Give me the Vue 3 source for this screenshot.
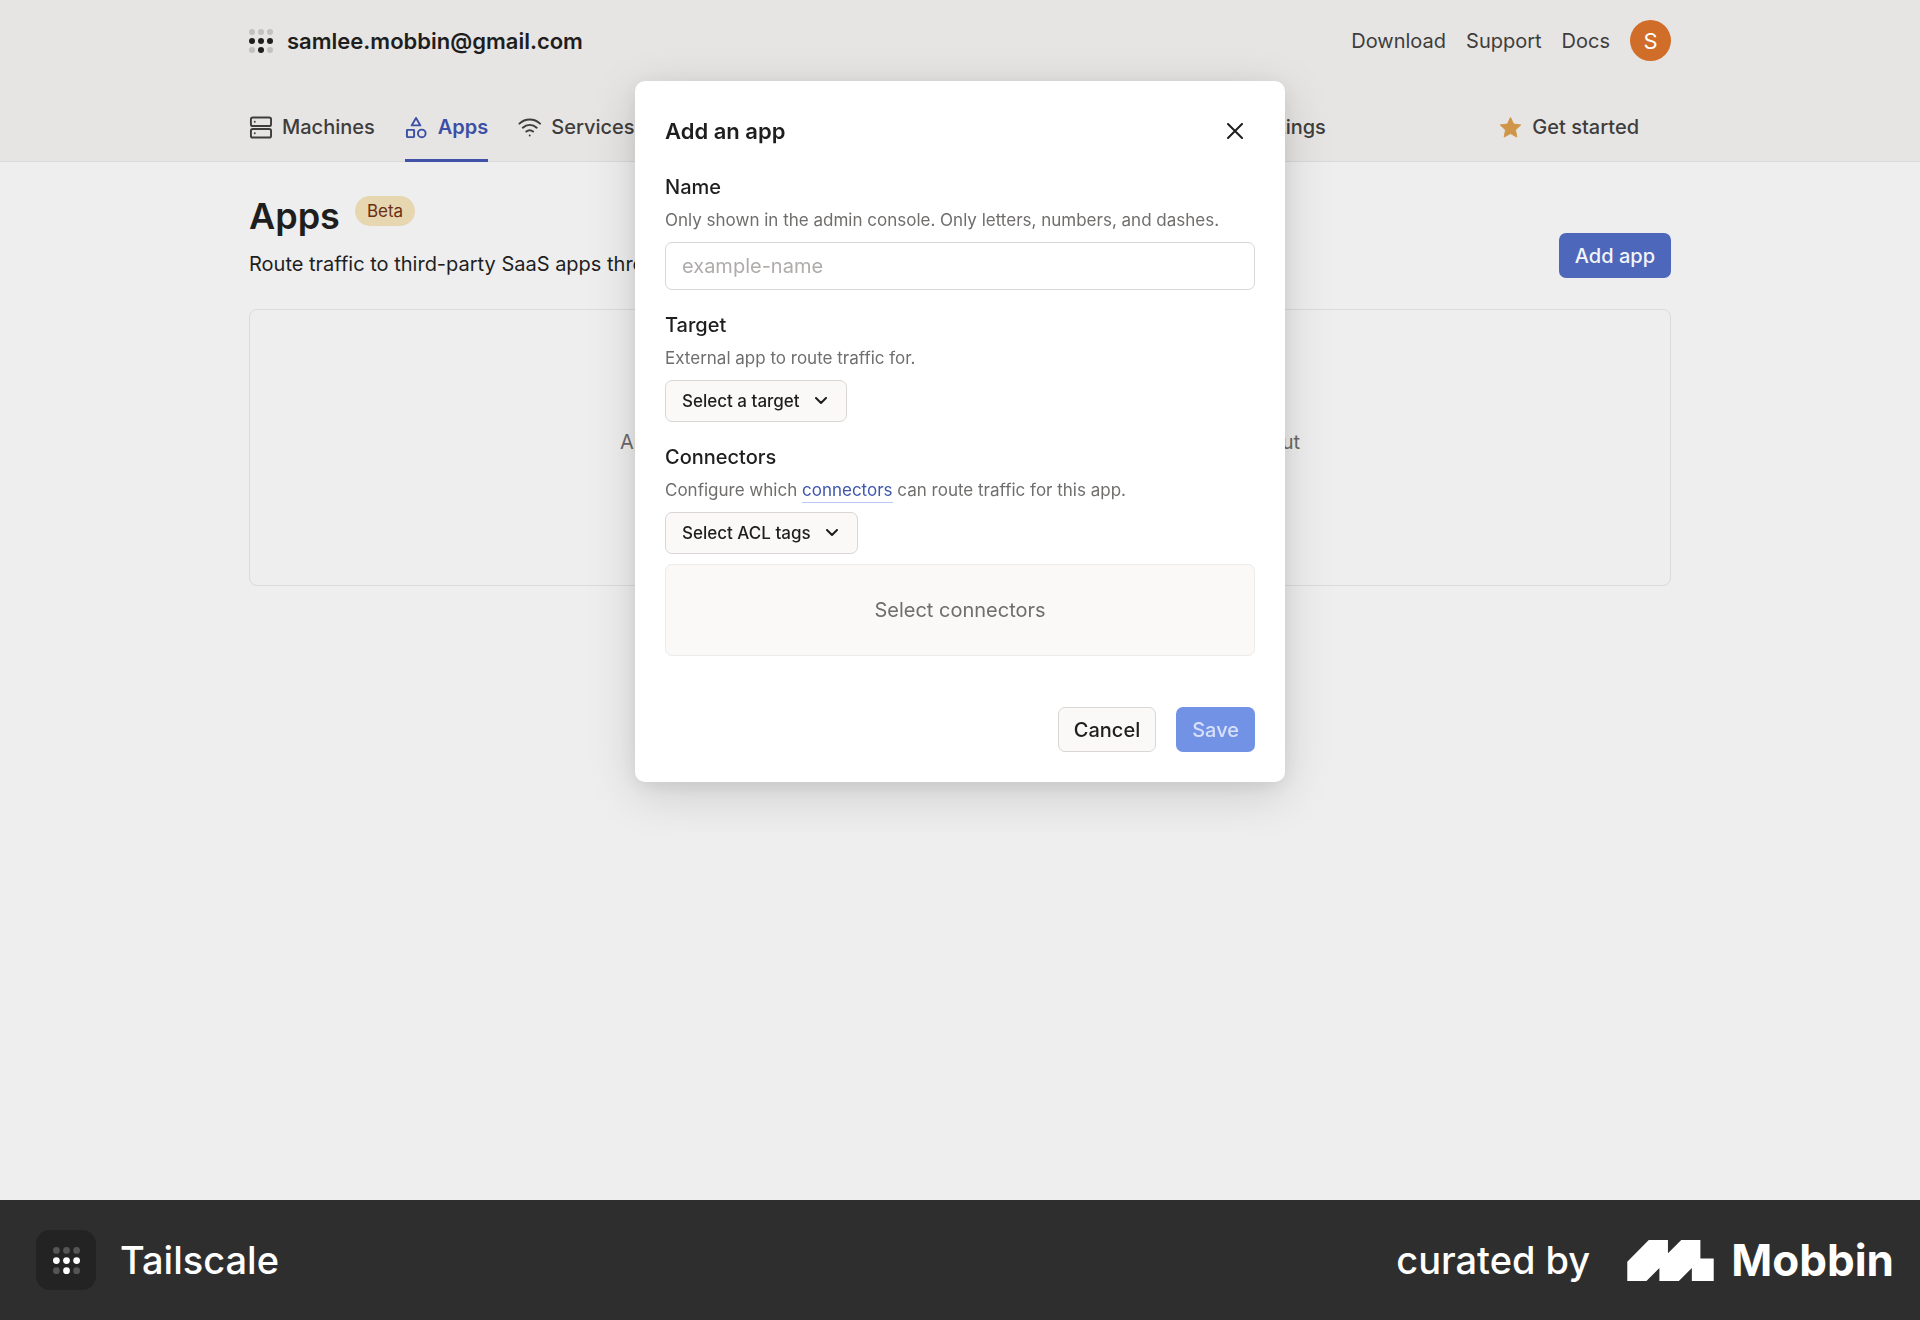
<script setup>
import { ref } from 'vue'

const name = ref('')
const dots = [
  [0, 0, 0],
  [1, 1, 1],
  [0, 1, 0],
].flatMap((row, y) => row.map((on, x) => ({ on: !!on, cx: 3 + x * 9, cy: 3 + y * 9 })))

const tabs = [
  { label: 'Machines', icon: 'machines' },
  { label: 'Apps', icon: 'apps', active: true },
  { label: 'Services', icon: 'services' },
  { label: 'Users', icon: 'users' },
  { label: 'Access controls', icon: 'lock' },
  { label: 'Logs', icon: 'logs' },
  { label: 'DNS', icon: 'dns' },
  { label: 'Settings', icon: 'settings' },
]
const icons = {
  machines: '<rect x="2" y="1.500" width="21" height="9" rx="2"/><rect x="2" y="13.500" width="21" height="9" rx="2"/><path d="M6 6h.01M6 18h.01"/>',
  apps: '<path d="M11.500 2l4.500 7.800H7z"/><rect x="2" y="14.500" width="7.500" height="7.500" rx=".5"/><circle cx="17.500" cy="18.200" r="4"/>',
  services: '<path d="M1.500 8a15.500 15.500 0 0 1 21.500 0M5 12.200a10.400 10.400 0 0 1 14.500 0M8.700 16.200a5.500 5.500 0 0 1 7 0M12.200 20.300h.01"/>',
  users: '<circle cx="9" cy="7" r="4"/><path d="M1 21v-2a4 4 0 0 1 4-4h8a4 4 0 0 1 4 4v2M16 3.100a4 4 0 0 1 0 7.800M23 21v-2a4 4 0 0 0-3-3.900"/>',
  lock: '<rect x="3" y="11" width="18" height="11" rx="2"/><path d="M7 11V7a5 5 0 0 1 10 0v4"/>',
  logs: '<path d="M4 5h16M4 12h16M4 19h10"/>',
  dns: '<circle cx="12" cy="12" r="10"/><path d="M2 12h20M12 2c5 6 5 14 0 20M12 2c-5 6-5 14 0 20"/>',
  settings: '<circle cx="12" cy="12" r="3"/><circle cx="12" cy="12" r="9"/>',
}
</script>

<template>
  <div class="page">
    <header class="header">
      <div class="container topbar">
        <a class="brand" href="#">
          <svg class="brand-dots" viewBox="0 0 24 24" aria-hidden="true">
            <circle v-for="d in dots" :key="`${d.cx}-${d.cy}`" :cx="d.cx" :cy="d.cy" r="3" :class="{ on: d.on }" />
          </svg>
          samlee.mobbin@gmail.com
        </a>
        <nav class="links" aria-label="Help">
          <a href="#">Download</a>
          <a href="#">Support</a>
          <a href="#">Docs</a>
          <button class="avatar" type="button" aria-label="Account">S</button>
        </nav>
      </div>
      <nav class="container tabs" aria-label="Main">
        <a v-for="t in tabs" :key="t.label" href="#" class="tab" :class="{ active: t.active }">
          <svg class="tab-icon" viewBox="0 0 24 24" aria-hidden="true" v-html="icons[t.icon]"></svg>
          {{ t.label }}
        </a>
        <a href="#" class="tab started">
          <svg class="star" viewBox="0 0 24 24" aria-hidden="true">
            <path d="M12 1.500l3.200 6.900 7.500.9-5.500 5.200 1.400 7.500-6.600-3.700L5.400 22l1.400-7.500L1.300 9.300l7.500-.9z" />
          </svg>
          Get started
        </a>
      </nav>
    </header>

    <main class="container main">
      <div class="intro">
        <div>
          <div class="heading">
            <h1>Apps</h1>
            <span class="badge">Beta</span>
          </div>
          <p class="subtitle">Route traffic to third-party SaaS apps through your tailnet.</p>
        </div>
        <button class="btn primary" type="button">Add app</button>
      </div>
      <section class="empty">
        <p>App connectors let you securely route traffic to third-party apps without</p>
      </section>
    </main>

    <footer class="footer">
      <div class="product">
        <span class="tile">
          <svg viewBox="0 0 24 24" aria-hidden="true">
            <circle v-for="d in dots" :key="`${d.cx}-${d.cy}`" :cx="d.cx" :cy="d.cy" r="3" :class="{ on: d.on }" />
          </svg>
        </span>
        <span>Tailscale</span>
      </div>
      <div class="curated">
        <span>curated by</span>
        <svg class="mobbin-mark" viewBox="0 0 253 120" aria-hidden="true">
          <path d="M0 64L63 0h56v39L158 0h56v54h39v66h-64V82l-38 38H94V82l-38 38H0z" />
        </svg>
        <strong>Mobbin</strong>
      </div>
    </footer>

    <div class="layer">
      <form class="modal" role="dialog" aria-modal="true" aria-labelledby="dialog-title" @submit.prevent>
        <div class="modal-head">
          <h2 id="dialog-title">Add an app</h2>
          <button class="close" type="button" aria-label="Close">
            <svg viewBox="0 0 16 16" aria-hidden="true"><path d="M1 1l14 14M15 1L1 15" /></svg>
          </button>
        </div>

        <div class="field">
          <label for="app-name">Name</label>
          <p id="name-hint">Only shown in the admin console. Only letters, numbers, and dashes.</p>
          <input id="app-name" v-model="name" type="text" placeholder="example-name" aria-describedby="name-hint" />
        </div>

        <div class="field">
          <label for="target">Target</label>
          <p>External app to route traffic for.</p>
          <span class="select">
            <select id="target"><option>Select a target</option></select>
            <svg viewBox="0 0 12 8" aria-hidden="true"><path d="M1 1l5 5 5-5" /></svg>
          </span>
        </div>

        <div class="field">
          <label for="tags">Connectors</label>
          <p>Configure which <a href="#">connectors</a> can route traffic for this app.</p>
          <span class="select">
            <select id="tags"><option>Select ACL tags</option></select>
            <svg viewBox="0 0 12 8" aria-hidden="true"><path d="M1 1l5 5 5-5" /></svg>
          </span>
        </div>

        <div class="placeholder">Select connectors</div>

        <div class="actions">
          <button class="btn secondary" type="button">Cancel</button>
          <button class="btn primary" type="submit" disabled>Save</button>
        </div>
      </form>
    </div>
  </div>
</template>

<style>
body {
  margin: 0;
}
</style>

<style scoped>
.page,
.page * {
  box-sizing: border-box;
}
.page {
  min-height: 100vh;
  display: flex;
  flex-direction: column;
  background: #eeeeee;
  color: #1f1e1e;
  font: 400 20px/28px Inter, "Liberation Sans", sans-serif;
}
.page h1,
.page h2,
.page p {
  margin: 0;
}
.page button,
.page input,
.page select {
  font-family: inherit;
}
.page a {
  color: inherit;
  text-decoration: none;
}
.container {
  width: 100%;
  max-width: 1486px;
  margin: 0 auto;
  padding: 0 32px;
}

.header {
  background: #e6e5e4;
  border-bottom: 1px solid #dad9d8;
}
.topbar {
  display: flex;
  align-items: center;
  justify-content: space-between;
  height: 81px;
  margin-bottom: 11px;
}
.brand {
  display: flex;
  align-items: center;
  gap: 14px;
  font-size: 22px;
  font-weight: 600;
}
.brand-dots {
  width: 24px;
  height: 24px;
  fill: #c2c1c1;
}
.brand-dots .on {
  fill: #1f1e1e;
}
.links {
  display: flex;
  align-items: center;
  gap: 20px;
  color: #3f3d3c;
}
.avatar {
  width: 41px;
  height: 41px;
  padding: 0;
  border: 0;
  border-radius: 50%;
  background: #d06d29;
  color: #fff;
  font-size: 22px;
}
.tabs {
  display: flex;
  gap: 30px;
  margin-bottom: -1px;
}
.tab {
  display: flex;
  align-items: center;
  gap: 10px;
  height: 70px;
  border: solid transparent;
  border-width: 3px 0;
  font-weight: 500;
  white-space: nowrap;
}
.page .tab {
  color: #3f3d3c;
}
.page .tab.active {
  border-bottom-color: #3f52a8;
  color: #3b4fa5;
  font-weight: 600;
}
.tab-icon {
  width: 23px;
  height: 23px;
  fill: none;
  stroke: currentColor;
  stroke-width: 2;
  stroke-linecap: round;
  stroke-linejoin: round;
}
.started {
  margin-left: auto;
  margin-right: 32px;
}
.star {
  width: 23px;
  height: 23px;
  fill: #cf9548;
  stroke: #cf9548;
  stroke-linejoin: round;
}

.main {
  flex: 1;
  padding-top: 32px;
}
.intro {
  display: flex;
  align-items: flex-end;
  justify-content: space-between;
  margin-bottom: 31px;
}
.heading {
  display: flex;
  align-items: flex-start;
  gap: 15px;
  margin-bottom: 12px;
}
h1 {
  font-size: 36px;
  line-height: 44px;
  font-weight: 600;
}
.badge {
  margin-top: 2px;
  padding: 0 12px;
  border-radius: 15px;
  background: #e6d7b1;
  color: #6b2e14;
  font-size: 17px;
  line-height: 30px;
}
.btn {
  height: 45px;
  padding: 0 15px;
  border: 1px solid transparent;
  border-radius: 7px;
  font-size: 20px;
  font-weight: 500;
}
.primary {
  background: #4d67ba;
  color: #f3f4f8;
}
.primary:disabled {
  background: #7292e5;
  color: #d6e0fa;
}
.secondary {
  border-color: #d9d6d5;
  background: #faf9f8;
  color: #1f1e1e;
}
.empty {
  display: flex;
  justify-content: center;
  height: 277px;
  padding-top: 118px;
  border: 1px solid #dcdbdb;
  border-radius: 8px;
  color: #6b6968;
}

.layer {
  position: fixed;
  inset: 0;
  display: flex;
  align-items: flex-start;
  justify-content: center;
  padding-top: 81px;
}
.modal {
  width: 650px;
  padding: 30px;
  border-radius: 10px;
  background: #fff;
  box-shadow: 0 12px 50px rgba(0, 0, 0, 0.14), 0 4px 20px rgba(0, 0, 0, 0.08);
}
.modal-head {
  display: flex;
  align-items: center;
  justify-content: space-between;
  height: 40px;
  margin-bottom: 20px;
}
h2 {
  font-size: 22px;
  font-weight: 600;
}
.close {
  display: grid;
  place-items: center;
  width: 40px;
  height: 40px;
  padding: 0;
  border: 0;
  background: none;
}
.close svg {
  width: 16px;
  height: 16px;
  fill: none;
  stroke: #1f1e1e;
  stroke-width: 2;
  stroke-linecap: round;
}
.field {
  display: flex;
  flex-direction: column;
  align-items: flex-start;
  margin-bottom: 19px;
}
.field label {
  font-weight: 500;
  line-height: 32px;
}
.field p {
  margin-bottom: 5px;
  color: #706e6d;
  font-size: 17px;
  line-height: 34px;
}
.page .field a {
  padding-bottom: 2px;
  border-bottom: 1px solid #b9c8f3;
  color: #3f56ad;
}
.field input {
  width: 100%;
  height: 48px;
  padding: 0 16px;
  border: 1px solid #d9d6d5;
  border-radius: 7px;
  background: #fff;
  color: #1f1e1e;
  font-size: 20px;
}
.field input::placeholder {
  color: #afacab;
}
.select {
  display: inline-grid;
  align-items: center;
}
.select > * {
  grid-area: 1 / 1;
}
.select select {
  appearance: none;
  height: 42px;
  padding: 0 46px 0 16px;
  border: 1px solid #d9d6d5;
  border-radius: 7px;
  background: #faf9f8;
  color: #1f1e1e;
  font-size: 17px;
  font-weight: 500;
}
.select svg {
  justify-self: end;
  width: 12px;
  height: 8px;
  margin-right: 20px;
  fill: none;
  stroke: #1f1e1e;
  stroke-width: 2;
  stroke-linecap: round;
  stroke-linejoin: round;
  pointer-events: none;
}
.placeholder {
  display: grid;
  place-items: center;
  height: 92px;
  margin: -9px 0 51px;
  border: 1px solid #edebea;
  border-radius: 7px;
  background: #faf9f8;
  color: #706e6d;
}
.actions {
  display: flex;
  justify-content: flex-end;
  gap: 20px;
}

.footer {
  display: flex;
  align-items: center;
  justify-content: space-between;
  height: 120px;
  padding: 0 26px 0 36px;
  background: #2e2e2e;
  color: #fff;
  font-size: 38px;
  line-height: 60px;
  font-weight: 500;
}
.product {
  display: flex;
  align-items: center;
  gap: 24px;
}
.tile {
  display: grid;
  place-items: center;
  width: 60px;
  height: 60px;
  border-radius: 14px;
  background: #232323;
}
.tile svg {
  width: 27px;
  height: 27px;
  fill: #555;
}
.tile .on {
  fill: #fff;
}
.curated {
  display: flex;
  align-items: center;
}
.mobbin-mark {
  width: 87px;
  height: 41px;
  margin: 0 17px 0 37px;
  fill: #fff;
}
.curated strong {
  font-size: 44px;
  font-weight: 700;
}
</style>
